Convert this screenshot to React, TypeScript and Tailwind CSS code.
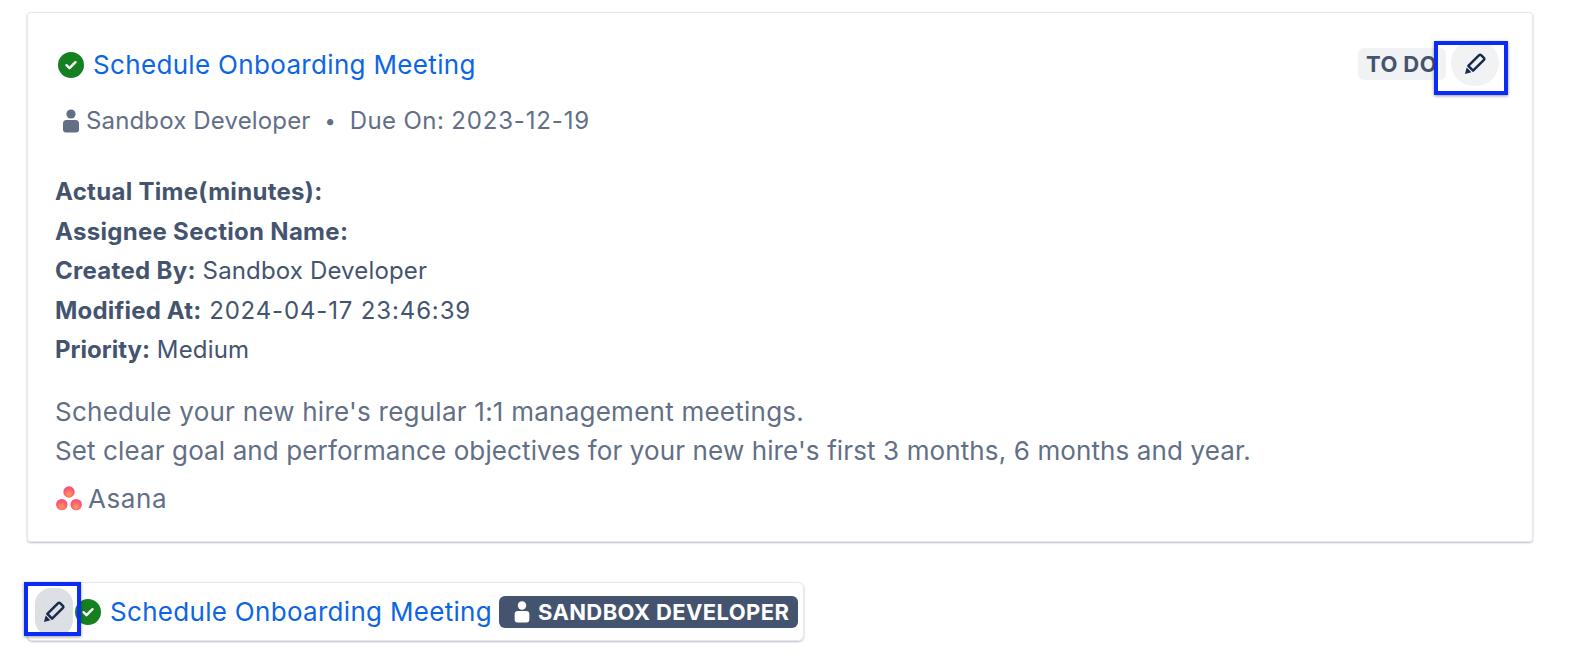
const font = { fontFamily: "Inter, sans-serif" };

const UserIcon = ({ className }: { className: string }) => (
  <svg viewBox="0 0 16 24" className={className} fill="currentColor">
    <circle cx="8" cy="5" r="4.6" />
    <path d="M3.500 11h9a3.500 3.500 0 0 1 3.500 3.500v6a3 3 0 0 1-3 3H3a3 3 0 0 1-3-3v-6A3.500 3.500 0 0 1 3.500 11z" />
  </svg>
);

const CheckCircle = ({ className }: { className: string }) => (
  <svg viewBox="0 0 26 26" className={className}>
    <circle cx="13" cy="13" r="13" fill="#15801f" />
    <path d="M8.500 13.200l3 3 6-6" fill="none" stroke="#fff" strokeWidth="2.400" strokeLinecap="round" strokeLinejoin="round" />
  </svg>
);

const Pencil = ({ className }: { className: string }) => (
  <svg viewBox="0 0 24 24" className={className}>
    <path d="M4.500 14.500L15.800 3.200a1.400 1.400 0 0 1 2 0l3 3a1.400 1.400 0 0 1 0 2L9.500 19.500z" fill="none" stroke="currentColor" strokeWidth="2.600" strokeLinejoin="round" />
    <path d="M2.800 16.300l4.900 4.900L1 23z" fill="currentColor" />
  </svg>
);

const AsanaLogo = () => (
  <svg viewBox="0 0 28 25" className="h-[25px] w-[28px]">
    <defs>
      <radialGradient id="asana" cx="50%" cy="70%" r="70%">
        <stop offset="0%" stopColor="#ff9a5c" />
        <stop offset="60%" stopColor="#fa5f70" />
        <stop offset="100%" stopColor="#f9487f" />
      </radialGradient>
    </defs>
    <circle cx="14" cy="6" r="5.700" fill="url(#asana)" />
    <circle cx="6.800" cy="18.600" r="5.700" fill="url(#asana)" />
    <circle cx="21.200" cy="18.600" r="5.700" fill="url(#asana)" />
  </svg>
);

const Field = ({ label, children }: { label: React.ReactNode; children?: React.ReactNode }) => (
  <div className="h-[39.500px] leading-[39.500px]">
    {label}
    {children}
  </div>
);

export default function App() {
  return (
    <div className="h-[670px] w-[1580px] bg-white pl-[27px] pt-3 text-[26px] text-[#44546f]" style={font}>
      <div className="relative h-[530px] w-[1506px] rounded border border-[#e6e8ec] pl-[27px] pt-[33px] shadow-[0_1px_2px_rgba(9,30,66,0.3)]">
        <div className="flex items-center gap-[9px] pl-[3px]">
          <CheckCircle className="h-[26px] w-[26px]" />
          <a className="text-[26px] leading-[38px] tracking-[0.33px] text-[#0c66e4]">Schedule Onboarding Meeting</a>
        </div>
        <div className="mt-[18px] flex items-center pl-[8px] text-[24px] leading-[38px] text-[#626f86]">
          <UserIcon className="h-[24px] w-[16px]" />
          <span className="ml-[7px] tracking-[0.15px]">Sandbox Developer</span>
          <span className="mx-[14px] text-[20px]">•</span>
          <span className="tracking-[0.4px]">Due On:</span>
          <span className="ml-[7px] tracking-[0.85px]">2023-12-19</span>
        </div>
        <div className="mt-[32px] text-[24px]">
          <Field label={<span className="font-bold tracking-[0.3px]">Actual Time(minutes):</span>} />
          <Field label={<span className="font-bold tracking-[0.3px]">Assignee Section Name:</span>} />
          <Field label={<span className="font-bold tracking-[0.3px]">Created By:</span>}>
            <span className="tracking-[0.15px]"> Sandbox Developer</span>
          </Field>
          <Field label={<span className="font-bold tracking-[0.2px]">Modified At:</span>}>
            <span className="tracking-[0.85px]"> 2024-04-17 23:46:39</span>
          </Field>
          <Field label={<span className="font-bold">Priority:</span>}>
            <span className="tracking-[0.15px]"> Medium</span>
          </Field>
        </div>
        <div className="mt-[22px] leading-[39.500px] text-[#626f86]">
          <div className="tracking-[0.24px]">Schedule your new hire's regular 1:1 management meetings.</div>
          <div className="tracking-[0.115px]">Set clear goal and performance objectives for your new hire's first 3 months, 6 months and year.</div>
        </div>
        <div className="mt-[9px] flex items-center leading-[38px] tracking-[0.6px] text-[#626f86]">
          <AsanaLogo />
          <span className="ml-[5px]">Asana</span>
        </div>
        <div className="absolute right-[33px] top-[27px] flex items-center">
          <span className="mt-[1px] rounded-md bg-[#f1f2f4] pl-2 pr-[9px] text-[22px] font-bold leading-[32px] tracking-[0.4px] text-[#44546f]">TO DO</span>
          <button className="ml-[5px] flex h-[46px] w-[48px] items-center justify-center rounded-full bg-[#f1f2f4] text-[#172b4d]">
            <Pencil className="h-[23px] w-[23px]" />
          </button>
        </div>
        <div className="absolute left-[1406px] top-[28px] h-[54px] w-[74px] border-[4px] border-[#0a2cf5] shadow-[0_1px_3px_rgba(0,0,0,0.4)]" />
      </div>
      <div className="relative mt-[40px] flex h-[59px] w-[777px] items-center rounded-md border border-[#e6e8ec] shadow-[0_1px_2px_rgba(9,30,66,0.3)]">
        <button className="ml-[7px] flex h-[48px] w-[38px] items-center justify-center rounded-2xl bg-[#dcdfe4] text-[#172b4d]">
          <Pencil className="h-[23px] w-[23px]" />
        </button>
        <CheckCircle className="ml-[2px] h-[26px] w-[26px]" />
        <a className="ml-[9px] text-[26px] tracking-[0.3px] text-[#0c66e4]">Schedule Onboarding Meeting</a>
        <span className="ml-[7px] mt-[1px] flex h-[32px] items-center rounded-md bg-[#44546f] pl-[15px] pr-[9px] text-[22px] font-bold tracking-[0.38px] text-white">
          <UserIcon className="mr-[8px] h-[22px] w-[16px]" />
          SANDBOX DEVELOPER
        </span>
        <div className="absolute -left-[4px] -top-[1px] h-[54px] w-[57px] border-[4px] border-[#0a2cf5] shadow-[0_1px_3px_rgba(0,0,0,0.4)]" />
      </div>
    </div>
  );
}
